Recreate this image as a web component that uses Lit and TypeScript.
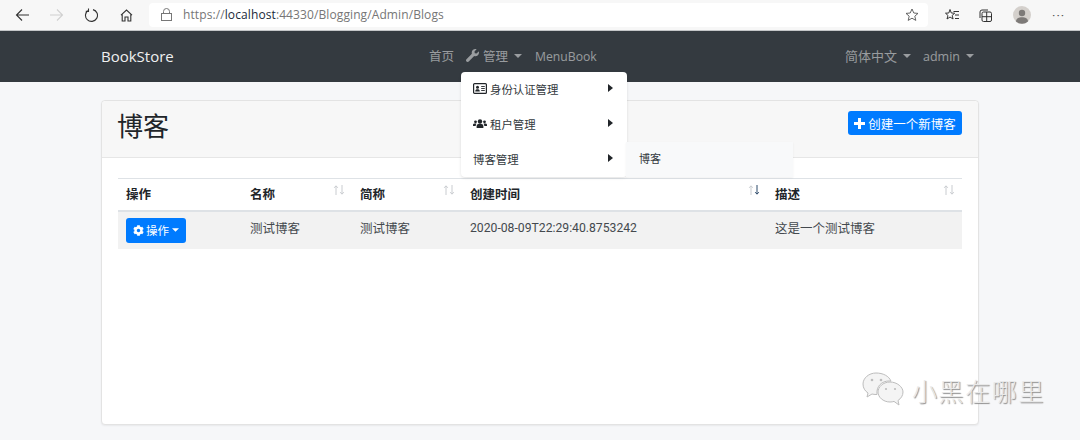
import { LitElement, html, css, svg } from "lit";
import { customElement } from "lit/decorators.js";

const sortIcon = (active = false) => html`<svg class="sort" width="12" height="12" viewBox="0 0 12 12" fill="none" stroke-width="1">
  <path d="M3 11V2M1.2 3.8 3 1.8l1.8 2" stroke="#c9ccd0"/>
  <path d="M9 1v9M7.2 8.2 9 10.2l1.8-2" stroke="${active ? "#2d4a6a" : "#c9ccd0"}"/>
</svg>`;

const caret = svg`<path d="M0 0h8L4 4z"/>`;
const arrow = html`<svg class="arrow" width="5" height="8" viewBox="0 0 5 8"><path d="M0 0l5 4-5 4z" fill="#212529"/></svg>`;

@customElement("app-root")
export class AppRoot extends LitElement {
  static styles = css`
    :host { display: block; width: 1080px; height: 440px; overflow: hidden; position: relative; background: #f6f7f9;
      font-family: "Roboto", "Noto Sans CJK SC", sans-serif; font-size: 12.5px; color: #212529; }
    .chrome { height: 30px; background: #f7f7f7; border-bottom: 1px solid #c4c6c8; display: flex; align-items: center; }
    .chrome svg { display: block; flex: none; }
    .back { margin-left: 15px; }
    .forward { margin-left: 19px; }
    .reload { margin-left: 20px; }
    .home { margin-left: 22px; }
    .url { margin-left: 16px; width: 779px; height: 24px; background: #fff; border-radius: 4px; display: flex; align-items: center; box-sizing: border-box; padding: 0 9px 0 12px; margin-top: -1px; }
    .url-text { margin-left: 11px; font-family: "Open Sans", sans-serif; font-size: 12px; color: #767676; flex: 1; letter-spacing: 0.1px; }
    .url-text b { font-weight: 400; color: #1a2a3a; }
    .fav { margin-left: 17px; }
    .coll { margin-left: 20px; }
    .avatar { margin-left: 21px; }
    .more { margin-left: 21px; color: #555; font-size: 13px; letter-spacing: 1px; }
    .nav { height: 51px; background: #343a40; display: flex; align-items: center; padding: 0 101px 2px; box-sizing: border-box; color: rgba(255,255,255,.5); font-size: 12.5px; }
    .brand { color: #fff; font-size: 15px; width: 328px; font-family: "Open Sans", sans-serif; opacity: .92; }
    .links { display: flex; align-items: center; flex: 1; }
    .links > span { display: inline-flex; align-items: center; white-space: nowrap; }
    .mgr { margin-left: 12px; }
    .mgr svg.wrench { margin-right: 4px; }
    .cv { margin-left: 6px; fill: currentColor; }
    .mb { margin: 1px 0 0 13px; font-family: "Open Sans", sans-serif; font-size: 12.2px; }
    .lang { margin-left: auto; font-size: 13px; }
    .admin { margin: 1px 5px 0 12px; font-family: "Open Sans", sans-serif; font-size: 12.5px; }
    .card { position: absolute; left: 101px; top: 100px; width: 878px; height: 325px; box-sizing: border-box; background: #fff; border: 1px solid #e3e3e3; border-radius: 4px; box-shadow: 0 1px 2px rgba(0,0,0,.06); }
    .head { height: 57px; box-sizing: border-box; background: #f7f7f7; border-bottom: 1px solid #e6e6e6; display: flex; align-items: flex-start; justify-content: space-between; padding: 10px 16px 0 15px; border-radius: 4px 4px 0 0; }
    .title { font-size: 26px; font-weight: 400; margin: 3px 0 0; color: #212529; line-height: 1; }
    .new { background: #007bff; color: #fff; border-radius: 3px; height: 24px; width: 114px; display: flex; align-items: center; justify-content: center; gap: 3px; font-size: 12.5px; white-space: nowrap; }
    .body { padding: 20px 16px; }
    table { width: 844px; border-collapse: collapse; table-layout: fixed; }
    th { height: 32px; text-align: left; padding: 0 8px 2px; font-weight: 700; font-size: 12.5px; border-top: 1px solid #dee2e6; border-bottom: 2px solid #dee2e6; position: relative; box-sizing: border-box; }
    td { height: 38px; padding: 0 8px 6px; font-size: 12.5px; color: #44494e; background: #f2f2f2; box-sizing: border-box; }
    td.op { padding-bottom: 0; }
    td.date { font-size: 12.2px; padding-bottom: 4px; }
    .sort { position: absolute; right: 7px; top: 5px; }
    .act { background: #007bff; color: #fff; border-radius: 3px; width: 60px; height: 25px; display: flex; align-items: center; justify-content: center; gap: 2px; font-size: 11.5px; white-space: nowrap; }
    .act .cv { margin-left: 1px; }
    .menu { position: absolute; left: 461px; top: 72px; width: 166px; height: 105px; background: #fff; border-radius: 4px; box-shadow: 0 1px 3px rgba(0,0,0,.12); display: flex; flex-direction: column; z-index: 2; font-size: 11.4px; }
    .mi { height: 35px; display: flex; align-items: center; padding: 0 13px 2px 12px; box-sizing: border-box; position: relative; color: #343a40; white-space: nowrap; }
    .mi svg.ico { margin-right: 3px; }
    .arrow { position: absolute; right: 14px; top: 12px; }
    .sub { position: absolute; left: 626px; top: 142px; width: 167px; height: 35px; background: #f8f9fa; box-shadow: 0 1px 2px rgba(0,0,0,.06); display: flex; align-items: center; padding: 0 0 4px 13px; box-sizing: border-box; font-size: 11px; color: #343a40; z-index: 2; }
    .wm { position: absolute; left: 862px; top: 372px; display: flex; align-items: center; gap: 8px; z-index: 3; color: #e9e9e9; font-size: 25px; letter-spacing: 1.6px; text-shadow: 1px 1px 1px #8c8c8c; font-family: "Noto Sans CJK SC", sans-serif; font-weight: 300; line-height: 36px; }
    .wm span { margin-top: -3px; }
  `;

  render() {
    return html`
      <div class="chrome">
        <svg class="back" width="15" height="14" viewBox="0 0 15 14" fill="none" stroke="#333" stroke-width="1.1"><path d="M14 7H1.5M7 1.5 1.5 7 7 12.5"/></svg>
        <svg class="forward" width="15" height="14" viewBox="0 0 15 14" fill="none" stroke="#d0d0d0" stroke-width="1.1"><path d="M1 7h12.5M8 1.5 13.5 7 8 12.5"/></svg>
        <svg class="reload" width="14" height="14" viewBox="0 0 14 14" fill="none" stroke="#333" stroke-width="1.1"><path d="M4.5 2.2A6 6 0 1 0 9 1.6M4.5.6v2.8H1.8"/></svg>
        <svg class="home" width="13" height="13" viewBox="0 0 13 13" fill="none" stroke="#333" stroke-width="1.1"><path d="M1 6.2 6.5 1 12 6.2M2.2 5.2V12H5V8h3v4h2.8V5.2"/></svg>
        <div class="url">
          <svg width="11" height="13" viewBox="0 0 11 13" fill="none" stroke="#777" stroke-width="1"><rect x=".5" y="5.5" width="10" height="7"/><path d="M2.5 5.5V3.500a3 3 0 0 1 6 0v2"/></svg>
          <span class="url-text">https://<b>localhost</b>:44330/Blogging/Admin/Blogs</span>
          <svg width="14" height="14" viewBox="0 0 14 14" fill="none" stroke="#555" stroke-width=".9"><path d="M7 1l1.800 4 4.200.4-3.200 2.800 1 4.200L7 10.200 3.200 12.400l1-4.200L1 5.400 5.200 5z"/></svg>
        </div>
        <svg class="fav" width="14" height="14" viewBox="0 0 14 14" fill="none" stroke="#333" stroke-width="1"><path d="M5 1.500 6.300 5l3.400.2-2.600 2.300 1 3.500L5 9 2 11l1-3.500L.5 5.200 3.800 5z" fill="#fff"/><path d="M8.500 3.500H14M10 7h4M10 10.500h4"/></svg>
        <svg class="coll" width="13" height="13" viewBox="0 0 13 13" fill="none" stroke="#333" stroke-width="1"><rect x="3" y="3" width="9.500" height="9.500" rx="1.500"/><path d="M1 9V3a2 2 0 0 1 2-2h6M7.700 3v9.500M3 7.700h9.500"/></svg>
        <svg class="avatar" width="18" height="18" viewBox="0 0 18 18"><circle cx="9" cy="9" r="9" fill="#d4d0cc"/><circle cx="9" cy="7" r="3.200" fill="#7d7a78"/><path d="M3 15.500c0-3 2.800-4.200 6-4.200s6 1.200 6 4.200a9 9 0 0 1-12 0z" fill="#7d7a78"/></svg>
        <span class="more">···</span>
      </div>
      <div class="nav">
        <span class="brand">BookStore</span>
        <div class="links">
          <span>首页</span>
          <span class="mgr"><svg class="wrench" width="13" height="13" viewBox="0 0 512 512" fill="currentColor"><path d="M507.700 109.100c-2.200-9-13.500-12.100-20.100-5.500l-74.400 74.400-67.900-11.300-11.300-67.900 74.400-74.400c6.600-6.600 3.400-17.900-5.700-20.200-47.400-11.700-99.500.9-136.600 38-39.700 39.700-50.800 97.300-34.100 147.200L18.700 402.800c-25 25-25 65.500 0 90.500 25 25 65.500 25 90.500 0l213.200-213.200c50 16.700 107.500 5.600 147.400-34.300 37.100-37.100 49.700-89.300 37.900-136.700z"/></svg>管理<svg class="cv" width="8" height="4" viewBox="0 0 8 4">${caret}</svg></span>
          <span class="mb">MenuBook</span>
          <span class="lang">简体中文<svg class="cv" width="8" height="4" viewBox="0 0 8 4">${caret}</svg></span>
          <span class="admin">admin<svg class="cv" width="8" height="4" viewBox="0 0 8 4">${caret}</svg></span>
        </div>
      </div>
      <div class="card">
        <div class="head">
          <h1 class="title">博客</h1>
          <div class="new"><svg width="11" height="11" viewBox="0 0 11 11" fill="#fff"><path d="M4 0h3v4h4v3H7v4H4V7H0V4h4z"/></svg>创建一个新博客</div>
        </div>
        <div class="body">
          <table>
            <colgroup><col style="width:124px"/><col style="width:110px"/><col style="width:110px"/><col style="width:305px"/><col style="width:195px"/></colgroup>
            <thead><tr>
              <th>操作</th>
              <th>名称${sortIcon()}</th>
              <th>简称${sortIcon()}</th>
              <th>创建时间${sortIcon(true)}</th>
              <th>描述${sortIcon()}</th>
            </tr></thead>
            <tbody><tr>
              <td class="op"><div class="act"><svg width="11" height="11" viewBox="0 0 512 512" fill="#fff"><path d="M487.400 315.700l-42.600-24.600c4.300-23.200 4.300-47 0-70.200l42.600-24.600c4.900-2.800 7.100-8.600 5.500-14-11.100-35.600-30-67.800-54.700-94.600-3.800-4.100-10-5.100-14.800-2.300L380.800 110c-17.900-15.400-38.500-27.300-60.800-35.100V25.800c0-5.600-3.900-10.500-9.400-11.700-36.700-8.200-74.300-7.800-109.200 0-5.500 1.200-9.400 6.100-9.400 11.700V75c-22.200 7.900-42.800 19.800-60.800 35.100L88.700 85.500c-4.900-2.800-11-1.900-14.800 2.300-24.700 26.700-43.600 58.900-54.700 94.600-1.700 5.400.6 11.200 5.500 14L67.300 221c-4.300 23.200-4.300 47 0 70.200l-42.600 24.600c-4.900 2.800-7.100 8.600-5.500 14 11.100 35.600 30 67.800 54.700 94.600 3.800 4.100 10 5.100 14.800 2.300l42.600-24.600c17.900 15.400 38.500 27.300 60.800 35.100v49.200c0 5.600 3.900 10.500 9.400 11.700 36.700 8.200 74.300 7.800 109.200 0 5.500-1.200 9.400-6.100 9.400-11.700v-49.200c22.200-7.900 42.800-19.800 60.800-35.100l42.600 24.600c4.900 2.800 11 1.900 14.800-2.300 24.700-26.700 43.600-58.900 54.700-94.600 1.500-5.500-.7-11.300-5.600-14.100zM256 336c-44.100 0-80-35.900-80-80s35.900-80 80-80 80 35.900 80 80-35.900 80-80 80z"/></svg>操作<svg class="cv" width="7" height="4" viewBox="0 0 8 4">${caret}</svg></div></td>
              <td>测试博客</td>
              <td>测试博客</td>
              <td class="date">2020-08-09T22:29:40.8753242</td>
              <td>这是一个测试博客</td>
            </tr></tbody>
          </table>
        </div>
      </div>
      <div class="menu">
        <div class="mi"><svg class="ico" width="14" height="11" viewBox="0 0 14 11"><rect x=".6" y=".6" width="12.800" height="9.800" rx="1" fill="#fff" stroke="#212529" stroke-width="1.200"/><circle cx="4.500" cy="4.200" r="1.500" fill="#212529"/><path d="M2.200 8.500c0-1.600 1-2.200 2.300-2.200s2.300.6 2.300 2.200z" fill="#212529"/><path d="M8.200 3.500h3.600M8.200 5.500h3.600M8.200 7.500h3.600" stroke="#212529" stroke-width=".9"/></svg>身份认证管理${arrow}</div>
        <div class="mi"><svg class="ico" width="14" height="11" viewBox="0 0 14 11" fill="#212529"><circle cx="7" cy="3.500" r="2.200"/><circle cx="2.500" cy="3.800" r="1.400"/><circle cx="11.500" cy="3.800" r="1.400"/><path d="M3.600 10V8.200c0-1.600 1.400-2.400 3.400-2.400s3.400.8 3.400 2.400V10zM0 8V6.800C0 6 .8 5.600 2.400 5.600c.5 0 .9.1 1.100.2C2.900 6.300 2.700 7 2.700 8zM14 8V6.800c0-.8-.8-1.200-2.400-1.200-.5 0-.9.1-1.100.2.600.5.800 1.200.8 2.200z"/></svg>租户管理${arrow}</div>
        <div class="mi">博客管理${arrow}</div>
      </div>
      <div class="sub">博客</div>
      <div class="wm">
        <svg width="42" height="38" viewBox="0 0 42 38" fill="#f4f4f4" stroke="#bdbdbd" stroke-width="1"><path d="M14 1C7 1 1 6 1 12c0 4 2 7 5 9l-1 4 5-3c1 .3 3 .5 4 .5h1C14 14 20 9 27 9c1 0 1 0 2 .2C27 4 21 1 14 1z"/><path d="M28 10c-7 0-12 5-12 10s5 10 12 10c1.500 0 3-.2 4-.6l5 3.600-1-4.500c3-2 5-5 5-8.500 0-5-6-10-13-10z"/><g fill="#bdbdbd" stroke="none"><circle cx="10" cy="8" r="1.300"/><circle cx="19" cy="8" r="1.300"/><circle cx="24" cy="17" r="1.100"/><circle cx="33" cy="17" r="1.100"/></g></svg>
        <span>小黑在哪里</span>
      </div>
    `;
  }
}
